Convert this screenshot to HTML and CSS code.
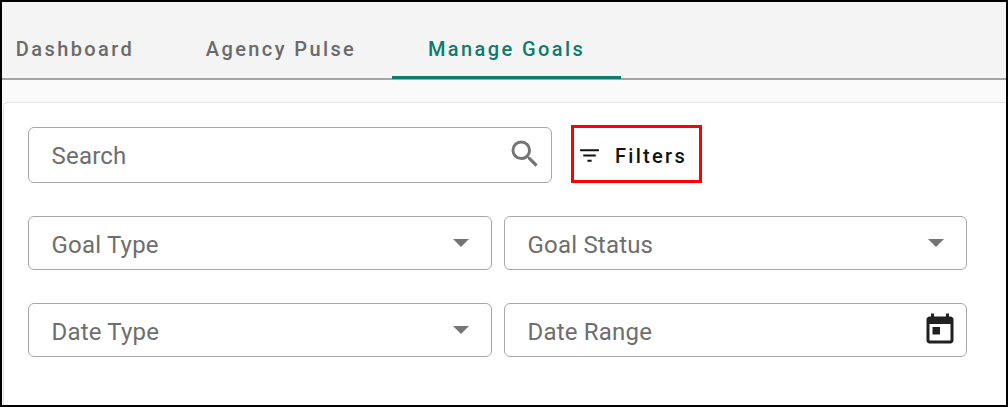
FILE: index.html
```html
<!DOCTYPE html>
<html lang="en">
<head>
<meta charset="utf-8">
<title>Manage Goals</title>
<link rel="stylesheet" href="styles.css">
</head>
<body>
<div class="frame">
  <nav class="tabs">
    <a class="tab tab-dash">Dashboard</a>
    <a class="tab tab-pulse">Agency Pulse</a>
    <a class="tab tab-goals active">Manage Goals</a>
  </nav>
  <main class="content">
    <section class="card">
      <div class="search-row">
        <div class="field search">
          <span class="ph">Search</span>
          <svg class="search-icon" width="36" height="36" viewBox="0 0 24 24"><path fill="#757575" d="M15.5 14h-.79l-.28-.27A6.47 6.47 0 0 0 16 9.5 6.5 6.5 0 1 0 9.5 16c1.61 0 3.09-.59 4.23-1.57l.27.28v.79l5 4.99L20.49 19l-4.99-5zm-6 0C7.01 14 5 11.99 5 9.5S7.01 5 9.5 5 14 7.01 14 9.5 11.99 14 9.5 14z"/></svg>
        </div>
        <button class="filters">
          <svg width="25" height="25" viewBox="0 0 24 24"><path fill="#111" d="M10 18h4v-2h-4v2zM3 6v2h18V6H3zm3 7h12v-2H6v2z"/></svg>
          <span>Filters</span>
        </button>
      </div>
      <div class="grid">
        <div class="field"><span class="ph">Goal Type</span><i class="caret"></i></div>
        <div class="field"><span class="ph">Goal Status</span><i class="caret"></i></div>
        <div class="field"><span class="ph">Date Type</span><i class="caret"></i></div>
        <div class="field"><span class="ph">Date Range</span>
          <svg class="cal" width="36" height="36" viewBox="0 0 24 24"><path fill="#212121" d="M19 3h-1V1h-2v2H8V1H6v2H5c-1.11 0-1.99.9-1.99 2L3 19c0 1.1.89 2 2 2h14c1.1 0 2-.9 2-2V5c0-1.1-.9-2-2-2zm0 16H5V8h14v11zM7 10h5v5H7z"/></svg>
        </div>
      </div>
    </section>
  </main>
</div>
</body>
</html>
```

FILE: styles.css
```css
* { box-sizing: border-box; }
html, body { margin: 0; padding: 0; }
body { font-family: Roboto, "Liberation Sans", sans-serif; background: #fff; }
.frame {
  width: 1008px; height: 407px; border: 2px solid #000;
  display: flex; flex-direction: column; overflow: hidden; background: #fafafa;
}
.tabs {
  height: 78px; flex: none; display: flex; align-items: stretch;
  background: #f4f4f4; border-bottom: 2px solid #a4a4a4;
}
.tab {
  display: flex; align-items: center; justify-content: center;
  font-size: 20px; font-weight: 500; letter-spacing: 2.4px; color: #6a6a6a;
  padding-top: 17px; height: 76px; margin-bottom: -1px;
}
.tab-dash { margin-left: 13px; width: 120px; }
.tab-pulse { margin-left: 69px; width: 154px; }
.tab-goals { margin-left: 34px; width: 229px; }
.tab.active { color: #0a7d6c; border-bottom: 3px solid #0a7d6c; padding-top: 20px; height: 77px; }
.content { flex: 1; padding: 22px 0 0 1px; }
.card {
  height: 100%; background: #fff; border: 1px solid #e4e4e4; border-bottom: 0; border-right: 0;
  border-radius: 5px 0 0 0; padding: 22px 37px 0 24px;
}
.search-row { display: flex; align-items: center; gap: 19px; }
.field {
  display: flex; align-items: center; justify-content: space-between;
  height: 54px; padding: 0 22px 0 22.5px; background: #fff;
  border: 1px solid #a8a8a8; border-radius: 6px;
}
.search { width: 524px; height: 56px; padding-right: 8px; margin-top: 2px; }
.ph { font-size: 24px; letter-spacing: 0.2px; color: #6e6e6e; padding-top: 2px; }
.grid { display: grid; grid-template-columns: 464px 463px; gap: 33px 12px; margin-top: 33px; }
.grid .ph { padding-top: 4px; }
.filters {
  width: 131px; height: 58px; display: flex; align-items: center; gap: 13px;
  padding: 3px 0 0 3px; background: #fff; border: 3px solid #f00; border-radius: 0;
  font: 500 20px Roboto, sans-serif; letter-spacing: 2.3px; color: #111;
}
.caret { width: 0; height: 0; border: 8px solid transparent; border-top: 8px solid #757575; border-bottom: 0; }
.cal { margin-right: -14px; margin-top: -1px; }
.search-icon { flex: none; margin-top: -2px; }
```
